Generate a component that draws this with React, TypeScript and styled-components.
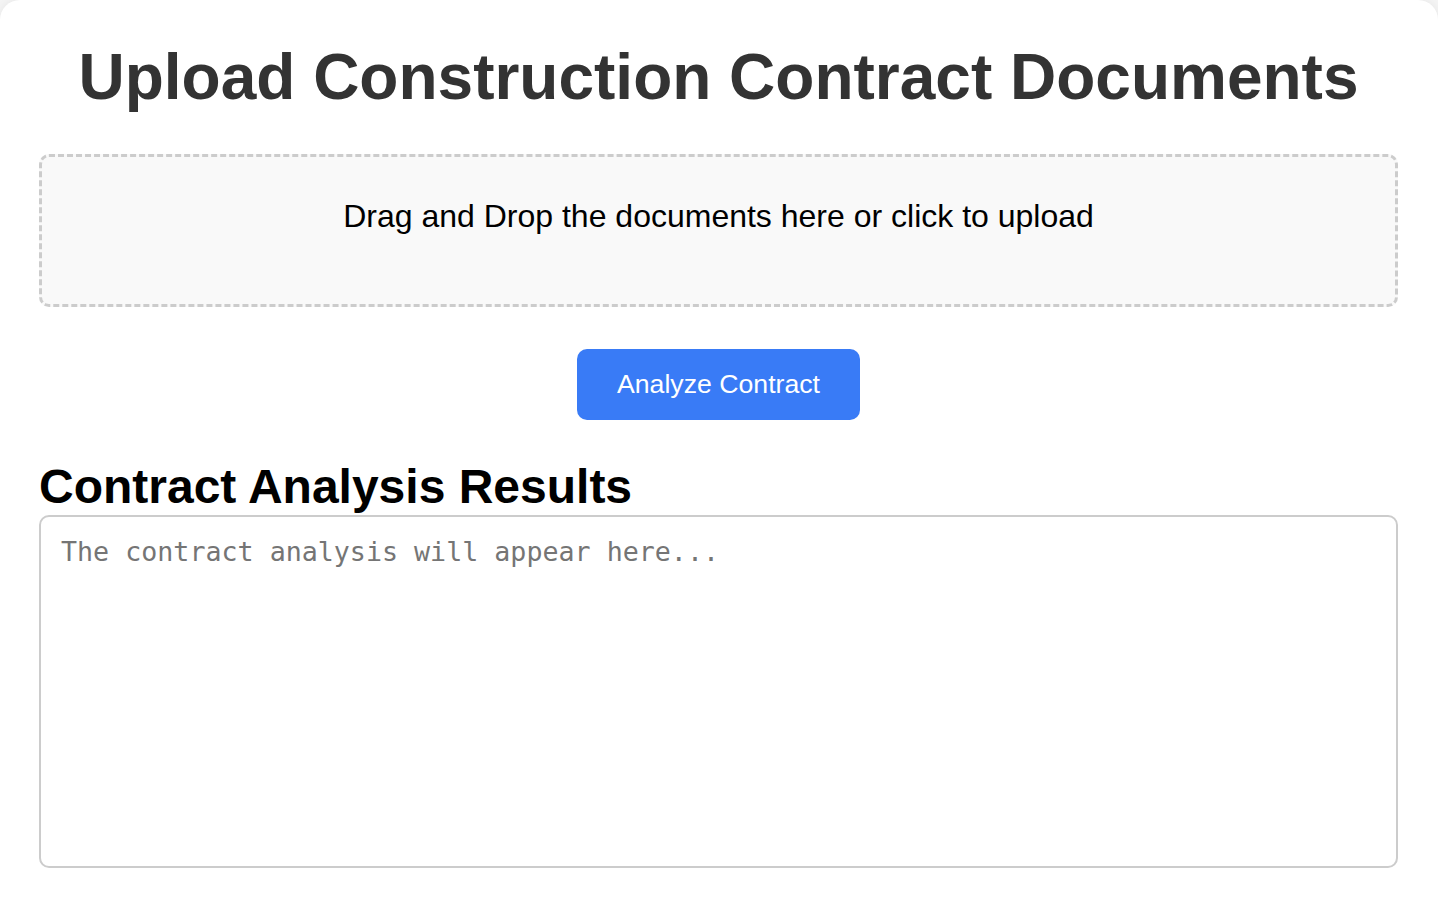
import * as React from 'react'
import styled, { createGlobalStyle } from 'styled-components'

const GlobalStyle = createGlobalStyle`
  html, body {
    margin: 0;
    padding: 0;
    background: #f4f4f4;
    font-family: "Liberation Sans", Arial, sans-serif;
  }
`

export default function App() {
    return (
        <>
            <GlobalStyle/>
            <Card>
                <Title>Upload Construction Contract Documents</Title>
                <DropZone>
                    <DropText>Drag and Drop the documents here or click to upload</DropText>
                </DropZone>
                <ButtonRow>
                    <AnalyzeButton type="button">Analyze Contract</AnalyzeButton>
                </ButtonRow>
                <ResultsTitle>Contract Analysis Results</ResultsTitle>
                <ResultsArea readOnly placeholder="The contract analysis will appear here..."/>
            </Card>
        </>
    )
}

const Card = styled.div`
  box-sizing: border-box;
  width: 100%;
  min-height: 940px;
  padding: 40px 40px 36px 39px;
  background: #ffffff;
  border-radius: 20px;
  box-shadow: 0 0 10px rgba(0, 0, 0, 0.06);
`

const Title = styled.h1`
  margin: 0 0 40px;
  text-align: center;
  font-size: 64px;
  font-weight: bold;
  color: #333333;
`

const DropZone = styled.div`
  box-sizing: border-box;
  height: 153px;
  padding: 41px 40px 0;
  border: 3px dashed #cccccc;
  border-radius: 10px;
  background: #f9f9f9;
  text-align: center;
  cursor: pointer;
`

const DropText = styled.p`
  margin: 0;
  font-size: 32px;
  color: #000000;
`

const ButtonRow = styled.div`
  display: flex;
  justify-content: center;
  margin: 42px 0 39px;
`

const AnalyzeButton = styled.button`
  height: 71px;
  padding: 0 40px;
  border: none;
  border-radius: 10px;
  background: #397bf6;
  color: #ffffff;
  font-family: "Liberation Sans", Arial, sans-serif;
  font-size: 26.67px;
  cursor: pointer;
`

const ResultsTitle = styled.h2`
  margin: 0 0 1px;
  font-size: 48px;
  font-weight: bold;
  color: #000000;
`

const ResultsArea = styled.textarea`
  box-sizing: border-box;
  display: block;
  width: 100%;
  height: 353px;
  padding: 19px 20px;
  border: 2px solid #cccccc;
  border-radius: 10px;
  resize: none;
  font-family: "DejaVu Sans Mono", "Liberation Mono", monospace;
  font-size: 26.67px;
  color: #333333;
  outline: none;

  &::placeholder {
    color: #757575;
  }
`
